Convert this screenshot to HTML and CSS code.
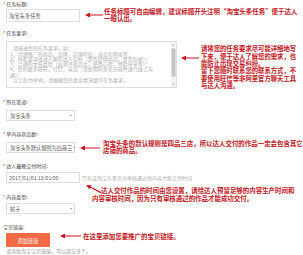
FILE: index.html
```html
<!DOCTYPE html>
<html lang="zh-CN">
<head>
<meta charset="utf-8">
<title>任务表单</title>
<link rel="stylesheet" href="styles.css">
</head>
<body>
<div class="page">
<div class="form">
  <div class="field f-title">
    <div class="label"><span class="req">*</span>任务标题:</div>
    <div class="input w-title">淘宝头条任务</div>
    <div class="note n1">
      <svg class="arrow" width="36" height="10" viewBox="0 0 18 5"><polygon points="0,2.5 5,0 5,5"/><line x1="4" y1="2.5" x2="18" y2="2.5"/></svg>
      <p class="note-text">任务标题可自由编辑，建议标题开头注明“淘宝头条任务”便于达人<br>一眼认出。</p>
    </div>
  </div>

  <div class="field f-desc">
    <div class="label"><span class="req">*</span>任务要求:</div>
    <div class="textarea">
      <div class="ta-text">
        <div class="ta-line ind">请描述您的任务要求，如：</div>
        <div class="ta-line">1、合理推广的商品，品牌，店铺特征，适合的风格等；</div>
        <div class="ta-line">2、你希望寻找达人拥有达人实拍（是否提供商品，是否包邮）；</div>
        <div class="ta-line">3、合理的文章类型（如测评商品会，使用心得，经验分享等）；</div>
        <div class="ta-line">4、您的联系旺旺，钉钉，电话（请使用阿里官方软件进行线上沟</div>
        <div class="ta-line">通）；</div>
        <div class="ta-line ind">以上仅为举例，请根据您的真实情况填写任务要求。</div>
      </div>
      <div class="scrollbar">
        <span class="sb-up"></span>
        <span class="sb-thumb"></span>
        <span class="sb-down"></span>
      </div>
    </div>
    <div class="note n2">
      <svg class="arrow" width="36" height="10" viewBox="0 0 18 5"><polygon points="0,2.5 5,0 5,5"/><line x1="4" y1="2.5" x2="18" y2="2.5"/></svg>
      <p class="note-text">请将您的任务要求尽可能详细地写<br>下来，便于达人了解您的需求，也<br>能防止出现交易纠纷。<br>留下您随时联系您的联系方式，不<br>要使用旺信等非阿里官方聊天工具<br>与达人沟通。</p>
    </div>
  </div>

  <div class="field f-channel">
    <div class="label"><span class="req">*</span>所在渠道:</div>
    <div class="select"><span class="sel-text">淘宝头条</span><span class="caret"></span></div>
  </div>

  <div class="field f-count">
    <div class="label"><span class="req">*</span>单内容商品数:</div>
    <div class="select"><span class="sel-text">淘宝头条默认规则为四品三</span><span class="caret"></span></div>
    <div class="note n4">
      <svg class="arrow" width="40" height="10" viewBox="0 0 20 5"><polygon points="0,2.5 5,0 5,5"/><line x1="4" y1="2.5" x2="20" y2="2.5"/></svg>
      <p class="note-text">淘宝头条的默认规则是四品三店，所以达人交付的作品一定会包含其它<br>店铺的商品。</p>
    </div>
  </div>

  <div class="field f-time">
    <div class="label"><span class="req">*</span>达人最晚交付时间:</div>
    <div class="row">
      <div class="input w-date">2017/01/01 12:01:00</div>
      <span class="hint">只有该淘宝头条官方审核通过的内容才能交付时间</span>
    </div>
    <div class="note n5">
      <svg class="arrow" width="34" height="20" viewBox="0 0 17 10"><polygon points="1,1 6.5,1.2 4.4,5.3"/><line x1="5" y1="3" x2="16" y2="8.6"/></svg>
      <p class="note-text">达人交付作品的时间由您设置，请给达人预留足够的内容生产时间和<br>内容审核时间，因为只有审核通过的作品才能成功交付。</p>
    </div>
  </div>

  <div class="field f-type">
    <div class="label"><span class="req">*</span>内容类型:</div>
    <div class="select"><span class="sel-text">帖子</span><span class="caret"></span></div>
  </div>

  <div class="field f-link">
    <div class="label">宝贝链接:</div>
    <div class="btn">添加链接</div>
    <div class="hint-below">请添加淘宝宝贝链接，可以提交多个。</div>
    <div class="note n7">
      <svg class="arrow" width="42" height="10" viewBox="0 0 21 5"><polygon points="0,2.5 5,0 5,5"/><line x1="4" y1="2.5" x2="21" y2="2.5"/></svg>
      <p class="note-text">在这里添加您要推广的宝贝链接。</p>
    </div>
  </div>
</div>
</div>
</body>
</html>
```

FILE: styles.css
```css
* { box-sizing: border-box; }
html, body { margin: 0; padding: 0; background: #fff; }
body {
  font-family: "Noto Sans CJK SC", "Noto Sans", sans-serif;
  color: #333;
  width: 303px;
  height: 255px;
  overflow: hidden;
}
/* the screenshot is a half-size capture: draw at 2x and scale down */
.page {
  width: 606px;
  height: 510px;
  margin: 0 -303px -255px 0;
  transform: scale(0.5);
  transform-origin: 0 0;
}
.form { padding-left: 6px; }
.field { position: relative; }

.label {
  font-size: 10px;
  line-height: 16px;
  height: 16px;
  color: #444;
  white-space: nowrap;
}
.req { color: #e4393c; margin-right: 2px; }

.input {
  margin-left: 6px;
  border: 2px solid #dedede;
  font-size: 10.6px;
  color: #555;
  padding-left: 4px;
  display: flex;
  align-items: center;
  white-space: nowrap;
}
.w-title { width: 148px; height: 26px; margin-top: 2px; }
.w-date { width: 148px; height: 22px; color: #666; }

.f-title { margin-bottom: 14px; }
.f-desc { margin-bottom: 20px; }
.f-channel { margin-bottom: 18px; }
.f-count { margin-bottom: 18px; }
.f-time { margin-bottom: 20px; }
.f-type { margin-bottom: 18px; }

.textarea {
  margin: 8px 0 0 6px;
  width: 342px;
  height: 94px;
  border: 2px solid #dedede;
  display: flex;
}
.ta-text {
  flex: 1;
  padding: 7px 0 0 6px;
  font-size: 10px;
  line-height: 10.6px;
  color: #aaa;
  white-space: nowrap;
  overflow: hidden;
}
.ta-line.ind { padding-left: 6px; }
.scrollbar {
  width: 10px;
  background: #f3f3f3;
  display: flex;
  flex-direction: column;
  align-items: center;
  padding: 4px 0;
}
.sb-up, .sb-down {
  width: 0; height: 0;
  border-left: 2.4px solid transparent;
  border-right: 2.4px solid transparent;
}
.sb-up { border-bottom: 3px solid #999; }
.sb-down { border-top: 3px solid #999; margin-top: auto; }
.sb-thumb {
  width: 8px;
  height: 56px;
  margin-top: 6px;
  background: #c4c4c4;
}

.select {
  margin: 8px 0 0 6px;
  width: 138px;
  height: 22px;
  border: 2px solid #dedede;
  display: flex;
  align-items: center;
  padding: 0 4px 0 6px;
  font-size: 10.4px;
  color: #555;
}
.f-type .select { margin-top: 4px; }
.sel-text { flex: 1; white-space: nowrap; }
.caret {
  width: 0; height: 0;
  margin-left: 2px;
  border-left: 2.4px solid transparent;
  border-right: 2.4px solid transparent;
  border-top: 3px solid #888;
}

.row {
  margin-top: 4px;
  display: flex;
  align-items: center;
  gap: 4px;
}
.hint {
  font-size: 10px;
  color: #aaa;
  white-space: nowrap;
}

.btn {
  margin: 4px 0 0 6px;
  width: 88px;
  height: 28px;
  background: #f26b45;
  color: #fff;
  font-size: 10.4px;
  display: flex;
  align-items: center;
  justify-content: center;
}
.hint-below {
  margin-left: 6px;
  font-size: 10px;
  line-height: 16px;
  color: #999;
  white-space: nowrap;
}

/* callout annotations laid over the form */
.note { position: absolute; top: 0; left: 0; }
.arrow { position: absolute; display: block; }
.arrow polygon { fill: #d0121b; }
.arrow line { stroke: #d0121b; stroke-width: 1.2; }
.note-text {
  position: absolute;
  margin: 0;
  font-size: 12.9px;
  line-height: 14px;
  font-weight: 700;
  color: #c3141c;
  white-space: nowrap;
}

.n1 .arrow { left: 164px; top: 25px; }
.n1 .note-text { left: 202px; top: 16px; }

.n2 .arrow { left: 356px; top: 53px; }
.n2 .note-text { left: 396px; top: 32px; line-height: 14.8px; font-size: 12.7px; }

.n4 .arrow { left: 154px; top: 31px; }
.n4 .note-text { left: 200px; top: 19px; }

.n5 .arrow { left: 164px; top: 44px; }
.n5 .note-text { left: 178px; top: 49px; line-height: 15px; text-indent: 18px; }

.n7 .arrow { left: 114px; top: 21px; }
.n7 .note-text { left: 160px; top: 19px; }
```
